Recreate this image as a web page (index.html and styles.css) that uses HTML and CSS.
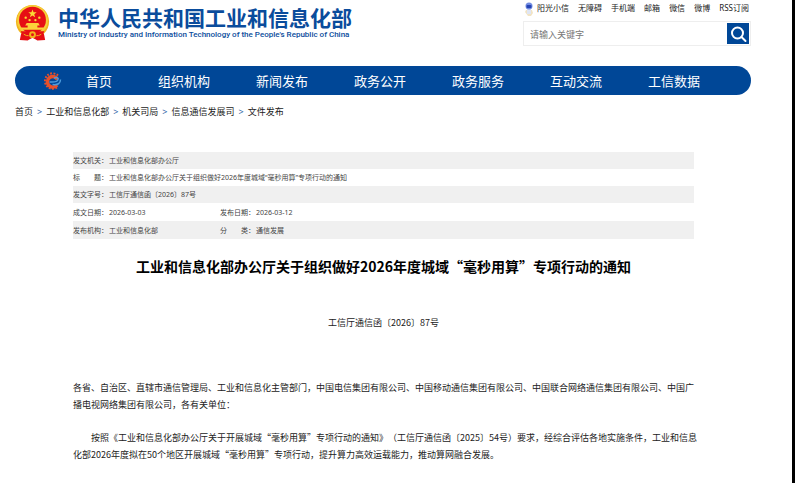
FILE: index.html
```html
<!DOCTYPE html>
<html lang="zh-CN">
<head>
<meta charset="utf-8">
<meta name="viewport" content="width=device-width, initial-scale=1">
<title>工业和信息化部办公厅关于组织做好2026年度城域“毫秒用算”专项行动的通知</title>
<link rel="stylesheet" href="styles.css">
</head>
<body>
<header class="header">
  <a class="brand" href="#">
    <svg class="emblem" viewBox="0 0 34 38" aria-hidden="true">
      <path fill="#e60f14" d="M6 26 4 36l8 .5 5-3 5 3 8-.5-2-10z"/>
      <circle cx="17" cy="17" r="17" fill="#f2b51c"/>
      <circle cx="17" cy="16" r="15.700" fill="#f6cf3a"/>
      <circle cx="17" cy="15.500" r="13.800" fill="#e60f14"/>
      <path fill="#fbdc35" d="m17 4.500 1.100 3h3.200l-2.500 2 .9 3.100-2.700-1.900-2.700 1.900.9-3.100-2.500-2h3.200z"/>
      <g fill="#fbdc35"><circle cx="10" cy="13" r="1.200"/><circle cx="14" cy="15.500" r="1.200"/><circle cx="20" cy="15.500" r="1.200"/><circle cx="24" cy="13" r="1.200"/></g>
      <path fill="#fbd23a" d="M11 18.500h12l1.500 2.500H22v2h6.500v2.500h-23V23H12v-2H9.500z"/>
      <path fill="#e60f14" d="M5 27h24l-3 9-9-2-9 2z"/>
      <circle cx="17" cy="30.500" r="3.500" fill="#f2b51c"/>
      <circle cx="17" cy="30.500" r="1.500" fill="#e60f14"/>
      <path fill="none" stroke="#f2b51c" stroke-width="1" d="M8 30q3 2 5 1.500M26 30q-3 2-5 1.500"/>
    </svg>
    <span class="brand-text">
      <span class="brand-name">中华人民共和国工业和信息化部</span>
      <span class="brand-en">Ministry of Industry and Information Technology of the People's Republic of China</span>
    </span>
  </a>
  <div class="tools">
    <div class="links">
      <a class="mascot-link" href="#"><svg class="mascot" viewBox="0 0 8 14" aria-hidden="true"><path fill="#f1e3c4" d="M1 8h6l1 3-2 3H3L0 10z"/><path fill="#dfe6f5" d="M2 7h4v5H2z"/><circle cx="4" cy="4" r="3.500" fill="#718be0"/><rect x="1.500" y="3" width="5" height="3" rx="1" fill="#2644b4"/></svg>阳光小信</a>
      <a href="#">无障碍</a><a href="#">手机端</a><a href="#">邮箱</a><a href="#">微信</a><a href="#">微博</a><a href="#">RSS订阅</a>
    </div>
    <form class="search">
      <input class="search-input" type="text" placeholder="请输入关键字" aria-label="请输入关键字">
      <button class="search-button" type="button" aria-label="搜索"><svg viewBox="0 0 22 22" aria-hidden="true"><circle cx="10.500" cy="10" r="5.500"/><path d="m14.500 14 4 4"/></svg></button>
    </form>
  </div>
</header>
<nav class="nav" aria-label="主导航">
  <svg class="nav-logo" viewBox="0 0 18 18" aria-hidden="true">
    <path fill="none" stroke="#e8502a" stroke-width="2" stroke-dasharray="1.800 1.400" d="M14 3.500A7.700 7.700 0 1 0 13.500 15"/>
    <path fill="none" stroke="#e8502a" stroke-width="3.500" d="M13.500 7.500A5.300 5.300 0 1 0 13 13"/>
    <path fill="none" stroke="#4b9bdc" stroke-width="1.500" d="M5.500 10q8 .5 8.500-2.500t-4-1.500M16.500 7.500q0 6-8 5"/>
  </svg>
  <a href="#">首页</a><a href="#">组织机构</a><a href="#">新闻发布</a><a href="#">政务公开</a><a href="#">政务服务</a><a href="#">互动交流</a><a href="#">工信数据</a>
</nav>
<nav class="crumbs" aria-label="当前位置">
  <a href="#">首页</a><span>&gt;</span><a href="#">工业和信息化部</a><span>&gt;</span><a href="#">机关司局</a><span>&gt;</span><a href="#">信息通信发展司</a><span>&gt;</span><a href="#">文件发布</a>
</nav>
<main class="article">
  <table class="meta">
    <colgroup><col class="col-label"><col class="col-value"><col class="col-label"><col></colgroup>
    <tbody>
      <tr><th scope="row">发文机关：</th><td colspan="3">工业和信息化部办公厅</td></tr>
      <tr><th scope="row">标　　题：</th><td colspan="3">工业和信息化部办公厅关于组织做好2026年度城域“毫秒用算”专项行动的通知</td></tr>
      <tr><th scope="row">发文字号：</th><td colspan="3">工信厅通信函〔2026〕87号</td></tr>
      <tr class="split"><th scope="row">成文日期：</th><td>2026-03-03</td><th scope="row">发布日期：</th><td>2026-03-12</td></tr>
      <tr class="split"><th scope="row">发布机构：</th><td>工业和信息化部</td><th scope="row">分　　类：</th><td>通信发展</td></tr>
    </tbody>
  </table>
  <h1 class="title">工业和信息化部办公厅关于组织做好2026年度城域“毫秒用算”专项行动的通知</h1>
  <p class="number">工信厅通信函〔2026〕87号</p>
  <div class="body-text">
    <p>各省、自治区、直辖市通信管理局、工业和信息化主管部门，中国电信集团有限公司、中国移动通信集团有限公司、中国联合网络通信集团有限公司、中国广播电视网络集团有限公司，各有关单位：</p>
    <p class="indent">按照《工业和信息化部办公厅关于开展城域“毫秒用算”专项行动的通知》（工信厅通信函〔2025〕54号）要求，经综合评估各地实施条件，工业和信息化部2026年度拟在50个地区开展城域“毫秒用算”专项行动，提升算力高效运载能力，推动算网融合发展。</p>
  </div>
</main>
</body>
</html>
```
FILE: styles.css
```css
* { box-sizing: border-box; }
body {
  margin: 0;
  min-height: 100vh;
  padding: 0 41px 0 15px;
  border-right: 3px solid #000;
  background: #fff;
  color: #222;
  font-family: "Noto Sans", "Noto Sans CJK SC", sans-serif;
  font-size: 9px;
  text-spacing-trim: space-all;
}
a { color: inherit; text-decoration: none; white-space: nowrap; }
p, h1 { margin: 0; }

.header { display: flex; justify-content: space-between; height: 66px; }
.brand { display: flex; align-items: flex-start; gap: 8px; padding-top: 5px; color: #0a4c9c; }
.emblem { width: 35px; height: 37px; }
.brand-text { display: flex; flex-direction: column; }
.brand-name { font: bold 21px/24px "Noto Sans CJK SC", sans-serif; }
.brand-en { font: 500 8px/12px Roboto, sans-serif; }

.tools { width: 228px; }
.links { display: flex; justify-content: space-between; height: 21px; padding-right: 2px; font-size: 8px; line-height: 16px; }
.mascot-link { display: flex; gap: 4px; padding-left: 2px; }
.mascot { width: 8px; height: 14px; margin-top: 2px; }
.search { display: flex; height: 25px; padding: 1px; border: 1px solid #eee; }
.search-input { flex: 1; min-width: 0; padding: 2px 5px 0; border: 0; background: none; font: inherit; }
.search-input::placeholder { color: #777; }
.search-button { width: 22px; padding: 0; border: 0; background: #004797; }
.search-button svg { display: block; width: 22px; fill: none; stroke: #fff; stroke-width: 2; stroke-linecap: round; }

.nav { display: flex; align-items: center; gap: 46px; height: 29px; padding-left: 29px; border-radius: 15px; background: #004797; color: #fff; font-size: 13px; line-height: 18px; }
.nav-logo { width: 18px; height: 18px; margin-right: -22px; }

.crumbs { display: flex; gap: 4px; padding-top: 9px; line-height: 16px; }
.crumbs span { color: #2d65a8; }

.article { padding: 32px 57px 0 58px; }
.meta { width: 100%; border-collapse: collapse; table-layout: fixed; font-size: 7px; line-height: 15px; color: #444; }
.col-label { width: 36px; }
.col-value { width: 111px; }
.meta tr { height: 17px; }
.meta .split { height: 18px; }
.meta tr:nth-child(odd) { background: #f0f0f0; }
.meta th, .meta td { padding: 0; font-weight: normal; text-align: left; white-space: nowrap; }
.title { margin-top: 16px; color: #000; font: bold 14px/22px "Noto Sans CJK SC", sans-serif; text-align: center; }
.number { margin-top: 38px; font: 9px/16px "Noto Sans CJK SC", sans-serif; text-align: center; }
.body-text { margin: 48px -4px 0 0; font: 9px/17px "Noto Sans CJK SC", sans-serif; }
.indent { margin-top: 16px; text-indent: 2em; }
```
